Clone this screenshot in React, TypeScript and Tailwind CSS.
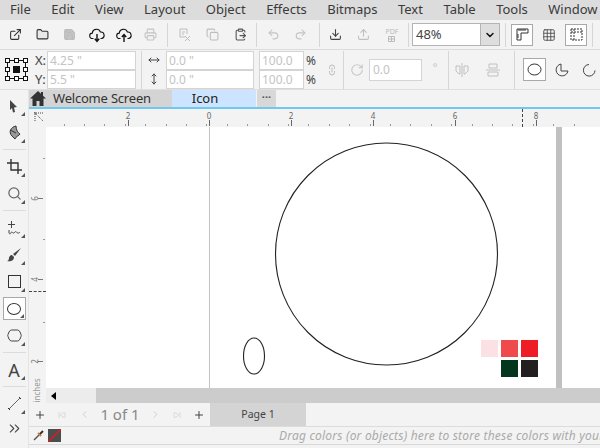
import React from 'react';
import { ExternalLink, Folder, Save, Printer, Copy, ClipboardPaste, Undo2, Redo2, Download, Upload, ChevronDown, Grid3x3, Plus, ChevronLeft, ChevronRight, SkipBack, SkipForward, ChevronsRight, MoveHorizontal, MoveVertical, Link2, RotateCw, Search } from 'lucide-react';

const menus = ['File', 'Edit', 'View', 'Layout', 'Object', 'Effects', 'Bitmaps', 'Text', 'Table', 'Tools', 'Window'];

const topTicks = [
  { x: 128, label: '2' },
  { x: 209, label: '0' },
  { x: 291, label: '2' },
  { x: 373, label: '4' },
  { x: 455, label: '6' },
  { x: 536, label: '8' },
];

const sideTicks = [
  { y: 72, label: '6' },
  { y: 153, label: '4' },
  { y: 235, label: '2' },
];

const topMinor = Array.from({ length: 26 }, (_, i) => 46.5 + i * 20.4);
const sideMinor = [31, 112, 195];

const Corner = () => (
  <span className="absolute right-[1px] bottom-[1px] w-0 h-0 border-l-[4px] border-l-transparent border-b-[4px] border-b-[#555]" />
);

const CloudIcon = ({ up }: { up?: boolean }) => (
  <svg width="16" height="16" viewBox="0 0 16 16" fill="none" stroke="#111" strokeWidth="1.1">
    <path d="M4.5 11.5H3.500A2.700 2.700 0 0 1 3.300 6.100 4.200 4.200 0 0 1 11.400 5 3.300 3.300 0 0 1 12.500 11.500H11.500" />
    {up ? <path d="M8 15V8M5.800 10 8 7.600 10.200 10" strokeWidth="1.4" /> : <path d="M8 7v7M5.800 11.800 8 14.400l2.200-2.600" strokeWidth="1.4" />}
  </svg>
);

const TopSlot = ({ children, w = 'w-[27px]' }: { children: React.ReactNode; w?: string }) => (
  <div className={`${w} h-[22px] flex items-center justify-center shrink-0`}>{children}</div>
);

const Sep = ({ h = 'h-[24px]', mx = 'mx-[5px]' }: { h?: string; mx?: string }) => (
  <div className={`w-[1px] ${h} ${mx} bg-[#d6d6d6] shrink-0`} />
);

const Field = ({ value, cls }: { value: string; cls: string }) => (
  <div className={`${cls} h-[19px] bg-white border border-[#d4d4d4] text-[12px] leading-[17px] pl-[2px] text-[#c4c4c4]`}>{value}</div>
);

const SideTool = ({ children, boxed, corner = true }: { children: React.ReactNode; boxed?: boolean; corner?: boolean }) => (
  <div className={`relative w-[23px] h-[23px] shrink-0 flex items-center justify-center ${boxed ? 'border border-[#a8a8a8] bg-white' : ''}`}>
    {children}
    {corner && <Corner />}
  </div>
);

const SideSep = () => <div className="w-[23px] h-[1px] shrink-0 bg-[#dcdcdc] my-[1px]" />;

export default function App() {
  return (
    <div className="w-[600px] h-[448px] overflow-hidden flex flex-col bg-[#f3f3f3] text-[#333] font-['Noto_Sans','Open_Sans',sans-serif]">
      {/* menu */}
      <div className="h-[20px] shrink-0 bg-[#dcdcdc] flex items-center pl-[10px] gap-[20.5px] text-[13px] whitespace-nowrap text-[#3a3a3a]">
        {menus.map((m) => (
          <span key={m}>{m}</span>
        ))}
      </div>

      {/* standard toolbar */}
      <div className="h-[30px] shrink-0 flex items-center pl-[2px] border-b border-[#dcdcdc]">
        <TopSlot><ExternalLink size={13} color="#333" /></TopSlot>
        <TopSlot><Folder size={13} color="#333" fill="#e8e8e8" /></TopSlot>
        <TopSlot><Save size={13} color="#bbb" fill="#c4c4c4" /></TopSlot>
        <TopSlot><CloudIcon /></TopSlot>
        <TopSlot><CloudIcon up /></TopSlot>
        <TopSlot><Printer size={13} color="#c4c4c4" /></TopSlot>
        <Sep mx="ml-[3px] mr-[2px]" />
        <TopSlot w="w-[28px]">
          <svg width="13" height="14" viewBox="0 0 13 14" fill="none" stroke="#bdbdbd"><path d="M7 9H2V1h7v5M4 4h3M4 6h2M7 8l5 5M12 8l-5 5" /></svg>
        </TopSlot>
        <TopSlot w="w-[28px]"><Copy size={13} color="#bdbdbd" /></TopSlot>
        <TopSlot w="w-[28px]"><ClipboardPaste size={13} color="#555" /></TopSlot>
        <Sep mx="ml-[2px] mr-[3px]" />
        <TopSlot><Undo2 size={13} color="#c4c4c4" /></TopSlot>
        <TopSlot><Redo2 size={13} color="#c4c4c4" /></TopSlot>
        <Sep mx="ml-[5px] mr-[1px]" />
        <TopSlot w="w-[28px]"><Download size={13} color="#444" /></TopSlot>
        <TopSlot w="w-[28px]"><Upload size={13} color="#c0c0c0" /></TopSlot>
        <TopSlot w="w-[30px]">
          <div className="flex flex-col items-center">
            <span className="text-[7px] leading-[9px] text-[#bbb]">PDF</span>
            <svg width="7" height="6" viewBox="0 0 7 6" fill="none" stroke="#bbb"><path d="M.5.500h6v5h-6zM3.500.500v5M.5 3h6" /></svg>
          </div>
        </TopSlot>
        <Sep mx="ml-[1px] mr-[3px]" />
        <div className="w-[88px] h-[23px] shrink-0 border border-[#b4b4b4] bg-white flex items-center">
          <span className="flex-1 pl-[3px] text-[13px] text-[#444]">48%</span>
          <div className="w-[19px] h-full bg-[#dedede] border-l border-[#b4b4b4] flex items-center justify-center">
            <ChevronDown size={12} strokeWidth={3} color="#111" />
          </div>
        </div>
        <Sep mx="mx-[5px]" />
        <div className="w-[22px] h-[22px] shrink-0 border border-[#a8a8a8] bg-white flex items-center justify-center">
          <svg width="13" height="13" viewBox="0 0 13 13" fill="none" stroke="#333"><path d="M1 12V1h11v4H5v7zM3 1v2M5 1v2M7 1v2M9 1v2M1 7h2M1 9h2" /></svg>
        </div>
        <div className="w-[32px] flex items-center justify-center shrink-0"><Grid3x3 size={14} color="#333" strokeWidth={1.3} /></div>
        <div className="w-[22px] h-[22px] shrink-0 border border-[#a8a8a8] bg-white flex items-center justify-center">
          <svg width="13" height="13" viewBox="0 0 13 13" fill="none" stroke="#333" strokeDasharray="2 1"><rect x="1" y="1" width="11" height="11" /><path d="M1 4h11M4 1v11" /></svg>
        </div>
        <Sep mx="mx-[5px]" />
      </div>

      {/* property bar */}
      <div className="h-[40px] shrink-0 flex items-center border-b border-[#dfdfdf]">
        <div className="w-[35px] flex justify-center shrink-0 pl-[1px] pr-[3px]">
          <svg width="23" height="23" viewBox="0 0 23 23" fill="none" stroke="#111" shapeRendering="crispEdges">
            <path d="M5 2.500h4M14 2.500h4M5 20.500h4M14 20.500h4M2.500 5v4M2.500 14v4M20.500 5v4M20.500 14v4" />
            {[[0, 0], [9, 0], [18, 0], [0, 9], [18, 9], [0, 18], [9, 18], [18, 18]].map(([x, y], i) => (
              <rect key={i} x={x + 0.5} y={y + 0.5} width="4" height="4" fill="#fff" />
            ))}
            <rect x="8" y="8" width="7" height="7" fill="#111" stroke="none" />
          </svg>
        </div>
        <div className="w-[12px] shrink-0 flex flex-col text-[13px] leading-[19px] text-[#444]">
          <span>X:</span>
          <span>Y:</span>
        </div>
        <div className="flex flex-col shrink-0">
          <Field value={'4.25 "'} cls="w-[89px]" />
          <Field value={'5.5 "'} cls="w-[89px]" />
        </div>
        <Sep h="h-[38px]" mx="ml-[5px] mr-0" />
        <div className="w-[24px] shrink-0 flex flex-col items-center">
          <div className="h-[19px] flex items-center"><MoveHorizontal size={12} color="#444" /></div>
          <div className="h-[19px] flex items-center"><MoveVertical size={12} color="#444" /></div>
        </div>
        <div className="flex flex-col shrink-0">
          <Field value={'0.0 "'} cls="w-[88px]" />
          <Field value={'0.0 "'} cls="w-[88px]" />
        </div>
        <div className="w-[5px] shrink-0" />
        <div className="flex flex-col shrink-0">
          <Field value="100.0" cls="w-[45px]" />
          <Field value="100.0" cls="w-[45px]" />
        </div>
        <div className="w-[16px] shrink-0 pl-[2px] flex flex-col text-[12px] leading-[19px] text-[#444]">
          <span>%</span>
          <span>%</span>
        </div>
        <div className="w-[23px] flex justify-center shrink-0"><Link2 size={12} color="#bbb" className="rotate-90" /></div>
        <Sep h="h-[38px]" mx="mx-0" />
        <div className="w-[25px] flex justify-center shrink-0"><RotateCw size={14} color="#c8c8c8" /></div>
        <div className="w-[53px] h-[22px] shrink-0 bg-white border border-[#d4d4d4] text-[12px] leading-[20px] pl-[3px] text-[#c4c4c4]">0.0</div>
        <div className="w-[26px] shrink-0 text-center text-[11px] text-[#c4c4c4] -mt-[5px]">°</div>
        <Sep h="h-[38px]" mx="mx-0" />
        <div className="w-[26px] flex justify-center shrink-0">
          <svg width="14" height="14" viewBox="0 0 14 14" fill="none" stroke="#c0c0c0"><path d="M7 0v14M1 3h4v8H4L1 8zM13 3H9v8h1l3-3z" /></svg>
        </div>
        <div className="w-[39px] pr-[3px] flex justify-center shrink-0">
          <svg width="14" height="14" viewBox="0 0 14 14" fill="none" stroke="#c0c0c0"><path d="M0 7h14M3 1h8v4H3zM2 9h10v4H2z" /></svg>
        </div>
        <Sep h="h-[38px]" mx="mx-0" />
        <div className="w-[23px] h-[23px] ml-[8px] shrink-0 border border-[#a8a8a8] bg-white flex items-center justify-center">
          <svg width="15" height="15" viewBox="0 0 15 15" fill="none" stroke="#333"><ellipse cx="7.500" cy="7.500" rx="6.500" ry="5.500" /></svg>
        </div>
        <div className="w-[32px] flex justify-center shrink-0">
          <svg width="14" height="14" viewBox="0 0 14 14" fill="none" stroke="#444"><path d="M6 1a6 6 0 1 0 7 7H6z" /></svg>
        </div>
        <div className="w-[22px] flex justify-center shrink-0">
          <svg width="14" height="14" viewBox="0 0 14 14" fill="none" stroke="#444"><path d="M7 1.500a5.800 5.800 0 1 0 6 6" /></svg>
        </div>
      </div>

      {/* main area */}
      <div className="flex-1 min-h-0 flex">
        {/* toolbox */}
        <div className="w-[29px] shrink-0 flex flex-col items-center pt-[4px] gap-[4px] border-r border-[#e4e4e4]">
          <SideTool>
            <svg width="12" height="14" viewBox="0 0 12 14"><path d="M2 1l7 7-3 .5L7 13l-2 .5L4 9l-2 2z" fill="#444" /></svg>
          </SideTool>
          <SideTool>
            <svg width="15" height="15" viewBox="0 0 15 15" fill="none" stroke="#333"><path d="M9 1C4 2 1 7 5 11l3 3c1-3 4-3 5-5-2-1-4-4-4-8z" fill="#999" /><path d="M3 5 9 8" /></svg>
          </SideTool>
          <SideSep />
          <SideTool>
            <svg width="15" height="15" viewBox="0 0 15 15" fill="none" stroke="#333" strokeWidth="1.4"><path d="M4 0v11h11M0 4h11v11" /></svg>
          </SideTool>
          <SideTool><Search size={15} color="#666" /></SideTool>
          <SideSep />
          <SideTool>
            <svg width="15" height="15" viewBox="0 0 15 15" fill="none" stroke="#444"><path d="M4.500 1v7M1 4.500h7M2 10v3c1 2 2 0 2.500-1s1.500 2 2.500 1 1.500-2 2.500-1 1.500 2 3.500 0" /></svg>
          </SideTool>
          <SideTool>
            <svg width="16" height="16" viewBox="0 0 16 16"><path d="M15 1 7 7l2 2zM6 8c-2 0-3 2-3 3 0 2-1 3-2 3 3 1 7 0 7-4z" fill="#444" /></svg>
          </SideTool>
          <SideTool>
            <div className="w-[13px] h-[13px] border border-[#333]" />
          </SideTool>
          <SideTool boxed>
            <div className="w-[14px] h-[12px] rounded-[50%] border border-[#333]" />
          </SideTool>
          <SideTool>
            <svg width="15" height="13" viewBox="0 0 15 13" fill="none" stroke="#444"><path d="M4.500 1h6Q12 1 13 3l1 2.500q.5 1 0 2L13 10q-1 2-2.500 2h-6Q3 12 2 10L1 7.500q-.5-1 0-2L2 3q1-2 2.500-2z" /></svg>
          </SideTool>
          <SideSep />
          <SideTool>
            <span className="text-[18px] leading-none text-[#444]">A</span>
          </SideTool>
          <SideSep />
          <SideTool>
            <svg width="15" height="15" viewBox="0 0 15 15" fill="none" stroke="#666"><path d="M2 13 13 2" /><path d="M1 12l2 2M12 1l2 2" stroke="#333" /></svg>
          </SideTool>
          <div className="mt-[1px]"><ChevronsRight size={17} strokeWidth={1.5} color="#444" /></div>
        </div>

        <div className="flex-1 min-w-0 flex flex-col">
          {/* document tabs */}
          <div className="h-[19px] shrink-0 flex border-b-2 border-[#6fc8f2] text-[13px] leading-[17px]">
            <div className="w-[143px] bg-[#d4d4d4] flex items-center">
              <svg width="16" height="15" viewBox="0 0 16 15" className="ml-[1px]" fill="#333"><path d="M8 0 0 7.500h2.500V15h4v-5h3v5h4V7.500H16L13 4.700V1h-2v1.800z" /></svg>
              <span className="ml-[7px] tracking-[-0.2px]">Welcome Screen</span>
            </div>
            <div className="w-[84px] bg-[#cce4ff] text-center text-[#222] pr-[18px]">Icon</div>
            <div className="w-[19px] ml-[1px] bg-[#d8d8d8] text-center text-[11px] leading-[14px] font-bold text-[#555]">···</div>
          </div>

          {/* horizontal ruler */}
          <div className="relative h-[18px] shrink-0">
            <svg className="absolute left-[5px] top-[3px]" width="10" height="10" viewBox="0 0 10 10" fill="none" stroke="#444" strokeDasharray="1 1"><path d="M0 1h9M1 0v9M1 1l8 8" /></svg>
            {topMinor.map((x) => (
              <div key={x} className="absolute bottom-[1px] w-[1px] h-[2px] bg-[#999]" style={{ left: x - 12 }} />
            ))}
            {topTicks.map((t) => (
              <div key={t.x} className="absolute top-[2px] text-[8px] leading-[9px] text-[#666] text-center w-[8px]" style={{ left: t.x - 33 }}>
                {t.label}
                <div className="w-[1px] h-[6px] bg-[#666] mx-auto" />
              </div>
            ))}
            <div className="absolute left-[493px] top-0 h-[18px] border-l border-dashed border-[#444]" />
          </div>

          <div className="flex-1 min-h-0 flex">
            {/* vertical ruler */}
            <div className="relative w-[17px] shrink-0">
              {sideMinor.map((y) => (
                <div key={y} className="absolute left-[14px] w-[2px] h-[1px] bg-[#999]" style={{ top: y }} />
              ))}
              {sideTicks.map((t) => (
                <div key={t.y} className="absolute left-[3px] flex items-center gap-[1px]" style={{ top: t.y - 5 }}>
                  <span className="text-[8px] leading-[9px] text-[#777] -rotate-90">{t.label}</span>
                  <div className="w-[5px] h-[1px] bg-[#777]" />
                </div>
              ))}
              <div className="absolute left-0 top-[164px] w-[17px] border-t border-dashed border-[#444]" />
              <span className="absolute left-[-8px] bottom-[8px] w-[30px] -rotate-90 text-[8px] leading-[9px] text-[#999] text-center">inches</span>
            </div>

            <div className="flex-1 min-w-0 flex flex-col">
              {/* drawing canvas */}
              <div className="relative flex-1 min-h-0 bg-white overflow-hidden">
                <div className="absolute left-[163px] top-0 bottom-0 w-[1px] bg-[#c4c4c4]" />
                <div className="absolute left-[510px] top-0 bottom-0 w-[6px] bg-[#c0c0c0]" />
                <svg className="absolute left-0 top-0" width="510" height="261" fill="none" stroke="#222" strokeWidth="1.1">
                  <circle cx="340.500" cy="127" r="111" />
                  <ellipse cx="208" cy="229" rx="10.500" ry="18" />
                </svg>
                <div className="absolute left-[435px] top-[213px] grid grid-cols-3 gap-[3px]">
                  <div className="w-[17px] h-[17px] bg-[#fbe1e3]" />
                  <div className="w-[17px] h-[17px] bg-[#ef4a4c]" />
                  <div className="w-[17px] h-[17px] bg-[#ee1c25]" />
                  <div className="w-[17px] h-[17px]" />
                  <div className="w-[17px] h-[17px] bg-[#03361d]" />
                  <div className="w-[17px] h-[17px] bg-[#231f20]" />
                </div>
              </div>
              {/* scrollbar */}
              <div className="h-[15px] shrink-0 flex bg-[#cccccc]">
                <div className="w-[50px] bg-[#ececec] flex items-center pl-[5px]">
                  <span className="w-0 h-0 border-y-[4px] border-y-transparent border-r-[5px] border-r-black" />
                </div>
              </div>
            </div>
          </div>

          {/* page navigator */}
          <div className="h-[24px] shrink-0 flex items-center border-b border-[#dcdcdc]">
            <div className="w-[22px] shrink-0 flex justify-center"><Plus size={12} color="#444" /></div>
            <div className="w-[22px] shrink-0 flex justify-center"><SkipBack size={8} color="#ccc" /></div>
            <div className="w-[22px] shrink-0 flex justify-center"><ChevronLeft size={11} color="#ccc" /></div>
            <span className="w-[50px] shrink-0 text-center text-[15px] text-[#888] whitespace-nowrap">1 of 1</span>
            <div className="w-[21px] shrink-0 flex justify-center"><ChevronRight size={11} color="#ccc" /></div>
            <div className="w-[22px] shrink-0 flex justify-center"><SkipForward size={8} color="#ccc" /></div>
            <div className="w-[22px] shrink-0 flex justify-center"><Plus size={12} color="#444" /></div>
            <div className="w-[96px] h-full shrink-0 bg-[#d4d4d4] text-center text-[10.500px] leading-[22px] text-[#444]">Page 1</div>
          </div>

          {/* color bar */}
          <div className="h-[18px] shrink-0 flex items-center overflow-hidden border-b border-[#d8d8d8]">
            <div className="w-[19px] shrink-0 flex justify-center">
              <svg width="11" height="11" viewBox="0 0 11 11" fill="none"><path d="M1 10 6 5" stroke="#555" strokeWidth="1.500" /><path d="M5 3l3 3" stroke="#c9803a" strokeWidth="2" /><path d="M7 4l3-3" stroke="#333" strokeWidth="2" /></svg>
            </div>
            <svg width="13" height="13" viewBox="0 0 13 13" className="shrink-0">
              <rect width="13" height="13" fill="#4d4d4d" />
              <line x1="0.500" y1="12.500" x2="12.500" y2="0.500" stroke="#f0141e" strokeWidth="1.2" />
            </svg>
            <span className="ml-[218px] shrink-0 italic text-[12px] text-[#aaa] whitespace-nowrap tracking-[0.2px]">Drag colors (or objects) here to store these colors with your document</span>
          </div>
          <div className="h-[3px] shrink-0" />
        </div>
      </div>
    </div>
  );
}
